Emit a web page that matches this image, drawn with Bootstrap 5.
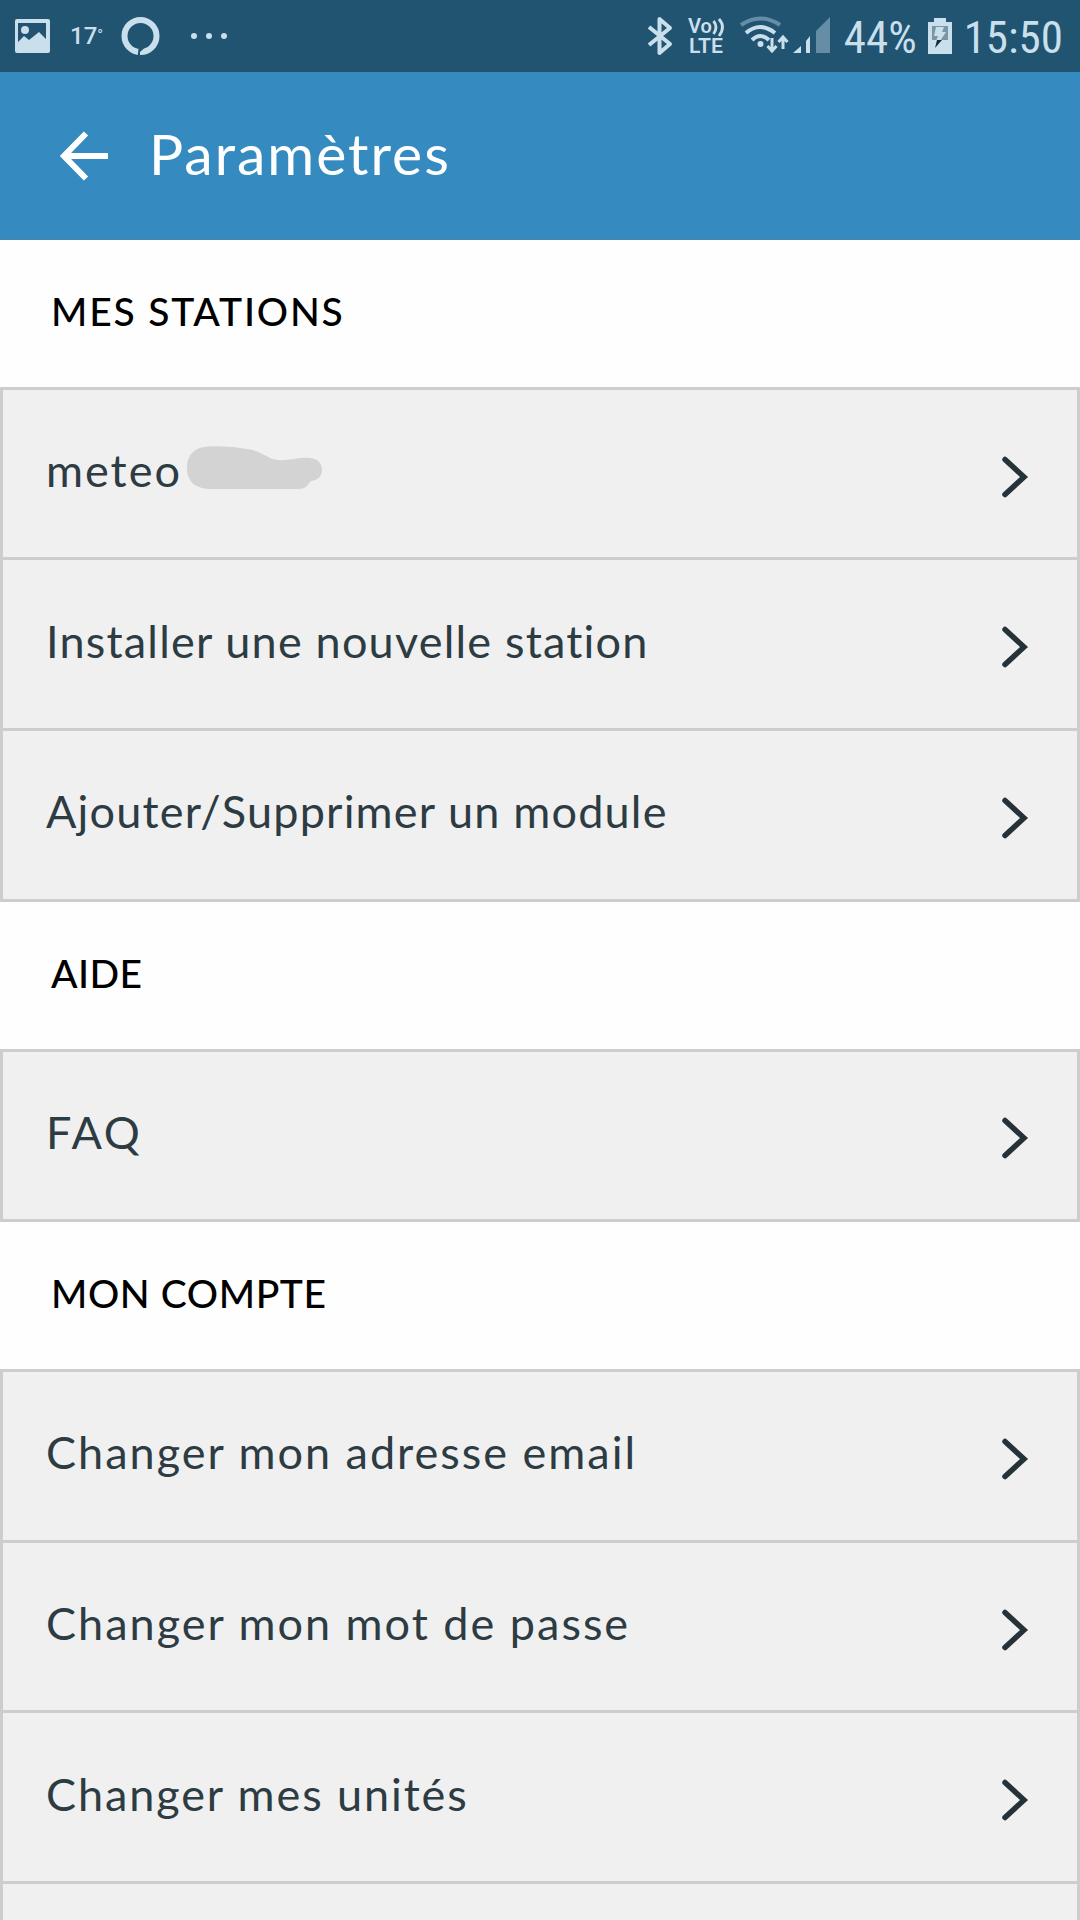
<!DOCTYPE html>
<html lang="fr">
<head>
<meta charset="utf-8">
<meta name="viewport" content="width=device-width, initial-scale=1">
<title>Paramètres</title>
<link href="https://cdn.jsdelivr.net/npm/bootstrap@5.3.0/dist/css/bootstrap.min.css" rel="stylesheet">
<style>
  body { font-family: Lato, "Open Sans", sans-serif; background: #fefefe; height: 1920px; overflow: hidden; }
  svg { display: block; flex: none; overflow: visible; }

  .statusbar { height: 72px; background: #205471; color: #c9dfec; padding: 0 17px 0 14px; }
  .status-num { font-family: "Roboto Condensed", Roboto, sans-serif; font-size: 45px; line-height: 72px; padding-top: 2px; height: 72px; margin-left: 13px; }
  .temp { font: 500 24px/24px Roboto, sans-serif; margin: 2px 0 0 19px; width: 52px; }
  .temp span { display: inline-block; font-size: 15px; transform: translateY(-4px); }
  .ic-ring { margin-left: -1px; }
  .ic-volte { margin-left: 14px; }
  .ic-wifi { margin-left: 13px; }
  .ic-signal { margin-left: 3px; }
  .ic-battery { margin: 0 -1px 0 11px; }

  .appbar { height: 168px; background: #358bbf; border-bottom: 2px solid #3d87b5; padding-left: 60px; }
  .back-arrow { margin-top: 2px; }
  .screen-title { font-size: 57px; line-height: 68px; letter-spacing: 2px; margin: 0 0 5px 40px; font-weight: 400; }

  .section-title { height: 146.8px; padding: 0 0 4px 51px; font-size: 39px; font-weight: 500; color: #000; margin: 0; }
  .settings { --bs-list-group-border-radius: 0; border: 3px solid #cdcdcd; border-top: 0; }
  .settings .setting { height: 170.667px; background: #f0f0f0; color: #2d3b43; border: 0; border-top: 3px solid #cdcdcd; border-radius: 0; padding: 0 47px 0 43px; font-size: 45px; line-height: 54px; }
  .settings .setting + .setting { border-top-width: 3px; margin: 0; }
  .settings .setting-partial { height: 39px; }
  .setting-label { margin-bottom: 7px; white-space: nowrap; }
  .chevron { margin-top: 6px; width: 30px; height: 44px; }
  .blob { margin: -5px 0 0 5px; }

  .ls-stations { letter-spacing: 1.8px; }
  .ls-aide { letter-spacing: .4px; }
  .ls-compte { letter-spacing: .6px; }
  .ls-meteo { letter-spacing: 2px; }
  .ls-install { letter-spacing: 1.2px; }
  .ls-module { letter-spacing: 1.18px; }
  .ls-faq { letter-spacing: 2.6px; }
  .ls-change { letter-spacing: 2px; }
  .ls-units { letter-spacing: 1.9px; }
</style>
<script src="https://cdn.jsdelivr.net/npm/bootstrap@5.3.0/dist/js/bootstrap.bundle.min.js"></script>
</head>
<body>
<svg class="position-absolute" width="0" height="0">
  <symbol id="chev" viewBox="0 0 30 44"><path d="M5 4.500L24 22L5 39.500" fill="none" stroke="#25323a" stroke-width="5.500" stroke-linecap="round"/></symbol>
</svg>

<div class="statusbar d-flex align-items-center justify-content-between">
  <div class="d-flex align-items-center">
    <svg width="37" height="36" viewBox="0 0 37 36"><path fill="#c9dfec" fill-rule="evenodd" d="M3 1H34Q36 1 36 3V33Q36 35 34 35H3Q1 35 1 33V3Q1 1 3 1ZM4 5V24L10 18L15 22L25 14L32 21V5Z"/><circle cx="11" cy="12" r="4" fill="#c9dfec"/></svg>
    <div class="temp">17<span>°</span></div>
    <svg class="ic-ring" width="39" height="40" viewBox="0 0 39 40"><circle cx="19.500" cy="20" r="16" fill="none" stroke="#c9dfec" stroke-width="6"/><path d="M17.500 32.500L23.500 32L19 36V39.500H16.800Z" fill="#205471"/></svg>
    <svg class="ms-4" width="60" height="12" viewBox="0 0 60 12" fill="#c9dfec"><circle cx="10" cy="6" r="3"/><circle cx="25" cy="6" r="3"/><circle cx="40" cy="6" r="3"/></svg>
  </div>
  <div class="d-flex align-items-center">
    <svg width="26" height="40" viewBox="0 0 26 40"><path d="M2 11L23 28L12.500 37V3L23 12L2 29" fill="none" stroke="#c9dfec" stroke-width="4" stroke-linejoin="round"/></svg>
    <svg class="ic-volte" width="40" height="40" viewBox="0 0 40 40" fill="#c9dfec" font-family="Roboto" font-weight="600" font-size="20"><text x="1" y="17" textLength="24" lengthAdjust="spacingAndGlyphs">Vo</text><text x="2" y="37" textLength="34" lengthAdjust="spacingAndGlyphs">LTE</text><path d="M26.500 5Q31.500 11 26.500 18M32 3Q39 11 32 20" fill="none" stroke="#c9dfec" stroke-width="2.800"/></svg>
    <svg class="ic-wifi" width="50" height="40" viewBox="0 0 50 40" fill="none" stroke="#c9dfec" stroke-width="4"><path d="M1 9Q20-4 40 9" stroke="#658da5"/><path d="M6 17Q20 5 35 17M12 24Q20 16 29 24"/><circle cx="20.500" cy="28" r="3" fill="#c9dfec" stroke="none"/><path d="M32 22V35M27.500 30L32 35L36.500 30M43 33V21M38.500 26L43 21L47.500 26" stroke-width="3"/></svg>
    <svg class="ic-signal" width="38" height="40" viewBox="0 0 38 40"><path fill="#c9dfec" d="M0 37L8 30V37ZM13 25L17 20V37H13Z"/><path fill="#658da5" d="M23 15L37 1V37H23Z"/></svg>
    <div class="status-num">44%</div>
    <svg class="ic-battery" width="24" height="38" viewBox="0 0 24 38"><path fill="#c9dfec" d="M6 1H18V5H24V37H0V5H6Z"/><path fill="#7996a7" d="M4 9H20V23H4Z"/><path fill="#c9dfec" d="M8 10H16L14 15H18L12 24H8L10 19H6Z"/><path fill="#152c3b" d="M9 23H14L7 31Z"/></svg>
    <div class="status-num">15:50</div>
  </div>
</div>

<header class="appbar d-flex align-items-center text-white">
  <svg class="back-arrow" width="49" height="50" viewBox="0 0 49 50"><path d="M26 2.500L4 25L26 47.500M4 25H48" fill="none" stroke="#fff" stroke-width="6"/></svg>
  <h1 class="screen-title">Paramètres</h1>
</header>

<main>
  <h2 class="section-title ls-stations d-flex align-items-center">MES STATIONS</h2>
  <div class="settings list-group">
    <a class="setting list-group-item d-flex align-items-center justify-content-between">
      <span class="setting-label ls-meteo d-flex align-items-center">meteo
        <svg class="blob" width="136" height="44" viewBox="0 0 136 44"><path fill="#d3d3d3" d="M0 22C0 8 8 1 22 0.500Q42-0.500 60 3C76 5 80 13 91 14C103 15 111 11 123 12C132 13 135 18 135 24C135 30 131 34 124 35C120 40 118 43 112 43H22C8 42 0 36 0 22Z"/></svg></span>
      <svg class="chevron"><use href="#chev"/></svg>
    </a>
    <a class="setting list-group-item d-flex align-items-center justify-content-between"><span class="setting-label ls-install">Installer une nouvelle station</span><svg class="chevron"><use href="#chev"/></svg></a>
    <a class="setting list-group-item d-flex align-items-center justify-content-between"><span class="setting-label ls-module">Ajouter/Supprimer un module</span><svg class="chevron"><use href="#chev"/></svg></a>
  </div>

  <h2 class="section-title ls-aide d-flex align-items-center">AIDE</h2>
  <div class="settings list-group">
    <a class="setting list-group-item d-flex align-items-center justify-content-between"><span class="setting-label ls-faq">FAQ</span><svg class="chevron"><use href="#chev"/></svg></a>
  </div>

  <h2 class="section-title ls-compte d-flex align-items-center">MON COMPTE</h2>
  <div class="settings list-group border-bottom-0">
    <a class="setting list-group-item d-flex align-items-center justify-content-between"><span class="setting-label ls-change">Changer mon adresse email</span><svg class="chevron"><use href="#chev"/></svg></a>
    <a class="setting list-group-item d-flex align-items-center justify-content-between"><span class="setting-label ls-change">Changer mon mot de passe</span><svg class="chevron"><use href="#chev"/></svg></a>
    <a class="setting list-group-item d-flex align-items-center justify-content-between"><span class="setting-label ls-units">Changer mes unités</span><svg class="chevron"><use href="#chev"/></svg></a>
    <a class="setting setting-partial list-group-item"></a>
  </div>
</main>
</body>
</html>
